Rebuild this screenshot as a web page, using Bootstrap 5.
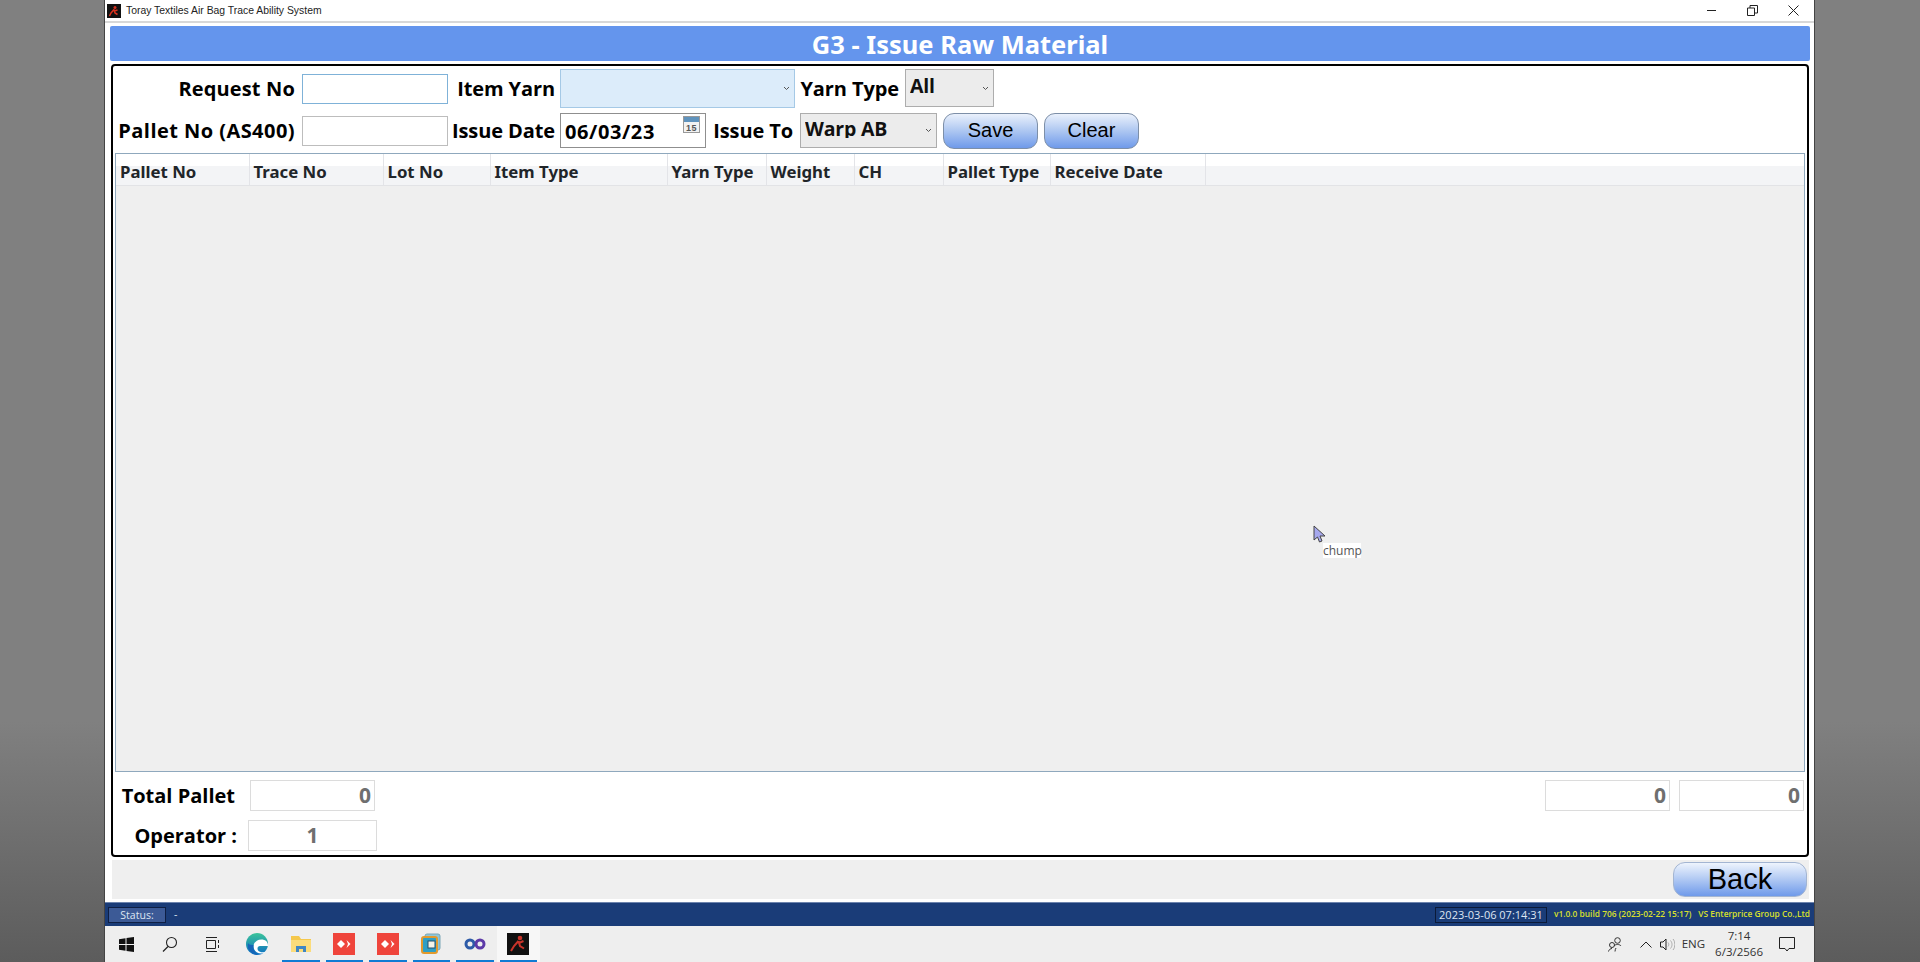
<!DOCTYPE html>
<html lang="en">
<head>
    <meta charset="UTF-8">
    <title>G3 - Issue Raw Material</title>
    <link href="https://cdn.jsdelivr.net/npm/bootstrap@5.3.0/dist/css/bootstrap.min.css" rel="stylesheet">
    <style>
        html, body { height: 100%; overflow: hidden; }
        body { background: linear-gradient(180deg, #808080 0, #808080 75%, #5c5c5c 100%); font-family: "Open Sans", "Noto Sans", sans-serif; color: #000; }
        .app-window { width: 1711px; height: 962px; margin-left: 104px; background: #fff; border-left: 1px solid #444; border-right: 1px solid #444; position: relative; }
        .title-strip { height: 23px; font-family: "Liberation Sans", sans-serif; font-size: 10.400px; color: #222; padding-left: 2px; border-bottom: 2px solid #d8d8d8; }
        .title-strip svg { margin-right: 5px; }
        .win-btn { width: 41px; display: flex; justify-content: center; }
        .win-btns { margin-right: -2px; }
        .form-banner { height: 35px; margin: 3px 4px 0 5px; background: #6495ed; color: #fff; font-family: "Noto Sans", sans-serif; font-weight: 700; font-size: 25.500px; border-radius: 2px; line-height: 36px; }
        .main-panel { margin: 3px 5px 0 6px; border: 2px solid #000; border-radius: 4px; min-height: 0; }
        .field-row { height: 35px; margin-top: 5px; }
        .field-row.first { height: 39px; margin-top: 3px; }
        .fld-label { font-weight: 700; font-size: 20px; text-align: right; white-space: nowrap; line-height: 1; margin-right: 6px; letter-spacing: -.1px; }
        .w-a { width: 182px; margin-right: 7px; }
        .w-a.req { letter-spacing: .15px; }
        .w-a.pal { letter-spacing: .45px; }
        .w-b { width: 107px; margin-right: 5px; }
        .w-c { width: 104px; }
        .w-d { width: 87px; margin-right: 7px; }
        .plain-input.form-control { width: 146px; height: 30px; border: 1px solid #bdbdbd; border-radius: 0; padding: 0 4px; }
        .plain-input.active-input { border-color: #7fb2d8; }
        .date-box { width: 146px; height: 35px; border: 1px solid #8f8f8f; font-weight: 700; font-size: 20px; letter-spacing: .6px; padding: 2px 4px 0; line-height: 31px; }
        .date-box svg { margin-top: -14px; margin-right: 1px; }
        .combo.form-select { height: 100%; border-radius: 0; padding: 0 0 4px 4px; font-weight: 700; font-size: 19.500px; letter-spacing: -.2px; line-height: 1; color: #111; background-color: #ececec; border: 1px solid #adadad; background-size: 7px 5px; background-position: right 4px center; background-image: url("data:image/svg+xml,%3csvg xmlns='http://www.w3.org/2000/svg' viewBox='0 0 7 5'%3e%3cpath fill='none' stroke='%23555' d='M1 1l2.500 2.500L6 1'/%3e%3c/svg%3e"); }
        .combo-yarn.form-select { width: 235px; background-color: #dcecfa; border-color: #a5c9e6; }
        .combo-type.form-select { width: 89px; height: 38px; margin-bottom: 1px; }
        .combo-issue.form-select { width: 137px; }
        .gel-btn.btn { height: 36px; width: 95px; margin-left: 6px; padding: 0 0 2px; font-family: "Liberation Sans", sans-serif; font-size: 20px; color: #000; border: 1px solid #7d8fa8; border-radius: 11px; background: linear-gradient(180deg, #eaf1fc 0, #b9cff3 40%, #6f9aea 100%); }
        .grid-box { margin: 5px 2px 0 2px; border: 1px solid #8fa8bd; background: #efefef; min-height: 0; }
        .grid-table.table { table-layout: fixed; width: 100%; margin: 0; --bs-table-bg: transparent; }
        .grid-table th { height: 31px; padding: 4px 0 0 4px; font-family: "Noto Sans", sans-serif; font-size: 16.800px; font-weight: 700; white-space: nowrap; vertical-align: middle; border-bottom: 1px solid #e2e3e6; border-right: 1px solid #e3e4e8; background: linear-gradient(180deg, #fff 0, #fff 38%, #f3f4f6 39%, #f3f4f6 100%); }
        .grid-table th:last-child { border-right: 0; }
        .foot-row { height: 31px; margin-top: 8px; }
        .foot-row + .foot-row { margin-top: 9px; margin-bottom: 4px; }
        .foot-label { font-weight: 700; font-size: 20px; text-align: right; white-space: nowrap; line-height: 1; }
        .foot-a { width: 122px; margin-right: 15px; }
        .foot-b { width: 124px; margin-right: 11px; }
        .num-box { width: 125px; height: 31px; border: 1px solid #dcdcdc; text-align: right; padding-right: 3px; color: #6f6f6f; font-weight: 700; font-size: 21px; line-height: 28px; }
        .num-box.op { width: 129px; text-align: center; padding: 0; }
        .num-box + .num-box { margin-left: 9px; }
        .num-group { margin-right: 3px; }
        .back-bar { height: 39px; margin: 3px 5px 0 7px; background: #efefef; }
        .back-btn.btn { width: 134px; height: 35px; margin: 2px 2px 0 0; padding: 0 0 1px; font-family: "Liberation Sans", sans-serif; font-size: 29px; line-height: 1; color: #000; border: 1px solid #a3b5d2; border-radius: 12px; background: linear-gradient(180deg, #eef4fd 0, #bcd1f5 40%, #6f9aea 100%); }
        .status-strip { height: 24px; margin-top: 3px; background: #1a3c78; color: #dfe6f2; font-size: 10.500px; border-top: 1px solid #6c83ad; }
        .status-tag { width: 58px; height: 16px; margin-left: 3px; background: #3c5a96; border: 1px solid #0e1f44; text-align: center; line-height: 14px; }
        .status-clock { width: 112px; height: 16px; background: #1a3c78; border: 1px solid #0b1a38; text-align: center; line-height: 14px; font-size: 11px; }
        .status-ver { color: #d9e02c; font-size: 8.400px; font-weight: 600; margin-left: 7px; white-space: nowrap; }
        .task-strip { height: 36px; background: #eee; }
        .task-item { width: 43.500px; height: 36px; display: flex; align-items: center; justify-content: center; position: relative; }
        .task-item.open::after { content: ""; position: absolute; left: 3px; right: 3px; bottom: 0; height: 2px; background: #0f7bd4; }
        .task-item.current { background: #f7f7f7; }
        .tray-text { font-size: 11.500px; color: #333; line-height: 16px; text-align: center; }
        .tray-people { margin-right: 18px; }
        .tray-up { margin-right: 8px; }
        .tray-eng { margin-left: 7px; }
        .tray-clock { margin-left: 10px; }
        .tray-tail { width: 19px; }
        .mouse-mark { position: absolute; left: 1208px; top: 525px; }
        .mouse-tip { position: absolute; left: 1218px; top: 543px; background: #fff; font-size: 12px; color: #555; line-height: 15px; width: 38px; text-align: center; }
    </style>
</head>
<body>
    <div class="app-window d-flex flex-column">
        <div class="title-strip d-flex align-items-center flex-shrink-0">
            <svg width="14" height="14" viewBox="0 0 14 14"><rect width="14" height="14" fill="#111"/><circle cx="8" cy="3.500" r="1.500" fill="#d8321f"/><path d="M7 5.500L4 9l-1.500 3M7 5.500l1 3.500 2.500 1.500M7.500 7l3-1" stroke="#d8321f" stroke-width="1.500" fill="none"/></svg>
            <span>Toray Textiles Air Bag Trace Ability System</span>
            <div class="win-btns ms-auto d-flex">
                <div class="win-btn"><svg width="11" height="11" viewBox="0 0 11 11"><path d="M1 5.500h9" stroke="#222"/></svg></div>
                <div class="win-btn"><svg width="11" height="11" viewBox="0 0 11 11"><path d="M.5 3h7v7.500h-7zM3 3V.5h7.500V8H7.500" fill="none" stroke="#222"/></svg></div>
                <div class="win-btn"><svg width="11" height="11" viewBox="0 0 11 11"><path d="M.5.500l10 10M10.500.500l-10 10" stroke="#222"/></svg></div>
            </div>
        </div>

        <div class="form-banner text-center flex-shrink-0">G3 - Issue Raw Material</div>

        <div class="main-panel d-flex flex-column flex-grow-1">
            <div class="field-row first d-flex align-items-center flex-shrink-0">
                <div class="fld-label w-a req">Request No</div>
                <input class="form-control plain-input active-input" type="text">
                <div class="fld-label w-b">Item Yarn</div>
                <select class="form-select combo combo-yarn"><option></option></select>
                <div class="fld-label w-c">Yarn Type</div>
                <select class="form-select combo combo-type"><option>All</option></select>
            </div>
            <div class="field-row d-flex align-items-center flex-shrink-0">
                <div class="fld-label w-a pal">Pallet No (AS400)</div>
                <input class="form-control plain-input" type="text">
                <div class="fld-label w-b">Issue Date</div>
                <div class="date-box d-flex justify-content-between align-items-center">
                    <span>06/03/23</span>
                    <svg width="17" height="17" viewBox="0 0 17 17"><rect x=".5" y=".5" width="16" height="16" fill="#f2f2f2" stroke="#999"/><rect x="1" y="1" width="15" height="5" fill="#5f93bd"/><text x="8.500" y="14.500" font-size="9" text-anchor="middle" fill="#555" font-family="Liberation Sans">15</text></svg>
                </div>
                <div class="fld-label w-d">Issue To</div>
                <select class="form-select combo combo-issue"><option>Warp AB</option></select>
                <button class="btn gel-btn" type="button">Save</button>
                <button class="btn gel-btn" type="button">Clear</button>
            </div>

            <div class="grid-box flex-grow-1">
                <table class="table grid-table">
                    <colgroup>
                        <col style="width:133px"><col style="width:134px"><col style="width:107px"><col style="width:177px"><col style="width:99px"><col style="width:88px"><col style="width:89px"><col style="width:107px"><col style="width:155px"><col>
                    </colgroup>
                    <thead>
                        <tr>
                            <th>Pallet No</th><th>Trace No</th><th>Lot No</th><th>Item Type</th><th>Yarn Type</th><th>Weight</th><th>CH</th><th>Pallet Type</th><th>Receive Date</th><th></th>
                        </tr>
                    </thead>
                </table>
            </div>

            <div class="foot-row d-flex align-items-center flex-shrink-0">
                <div class="foot-label foot-a">Total Pallet</div>
                <div class="num-box">0</div>
                <div class="num-group ms-auto d-flex">
                    <div class="num-box">0</div>
                    <div class="num-box">0</div>
                </div>
            </div>
            <div class="foot-row d-flex align-items-center flex-shrink-0">
                <div class="foot-label foot-b">Operator :</div>
                <div class="num-box op">1</div>
            </div>
        </div>

        <div class="back-bar d-flex justify-content-end flex-shrink-0">
            <button class="btn back-btn" type="button">Back</button>
        </div>

        <div class="status-strip d-flex align-items-center flex-shrink-0">
            <div class="status-tag">Status:</div>
            <span class="ms-2">-</span>
            <div class="status-clock ms-auto">2023-03-06 07:14:31</div>
            <span class="status-ver">v1.0.0 build 706 (2023-02-22 15:17)</span>
            <span class="status-ver me-1">VS Enterprice Group Co.,Ltd</span>
        </div>

        <div class="task-strip d-flex align-items-center flex-shrink-0">
            <div class="task-item"><svg width="15" height="15" viewBox="0 0 15 15"><path d="M0 2.200l6.500-1V7H0zM7.500 1L15 0v7H7.500zM0 8h6.500v5.800l-6.500-1zM7.500 8H15v7l-7.500-1z" fill="#111"/></svg></div>
            <div class="task-item"><svg width="16" height="16" viewBox="0 0 16 16"><circle cx="9.500" cy="6.500" r="5" fill="none" stroke="#222" stroke-width="1.100"/><path d="M6 10.500L1 15.500" stroke="#222" stroke-width="1.300"/></svg></div>
            <div class="task-item"><svg width="16" height="15" viewBox="0 0 16 15"><path d="M.5 3.500h9v8h-9zM0 .5h11M0 14.500h11M12.500 3v3M12.500 8v3" fill="none" stroke="#222"/></svg></div>
            <div class="task-item"><svg width="22" height="22" viewBox="0 0 22 22"><defs><linearGradient id="edgeA" x1="0" y1="0" x2="0" y2="1"><stop offset="0" stop-color="#3bc49a"/><stop offset="1" stop-color="#0c6fc4"/></linearGradient></defs><circle cx="11" cy="11" r="11" fill="url(#edgeA)"/><path d="M22 12.500c0-4-3-6-6.500-6-4.500 0-8 3-8 7 0 3.500 3 7 8 7 1.500 0 3-.5 4-1.500-3 1-8 0-8-3.500 0-1.500 1-2.500 2.500-2.500h8z" fill="#fff"/><path d="M8 21C3 19 1 15 2 10c1 2 3 2 5.500 2-.5 3 .5 7 4 9.500-1 .5-2.500.300-3.500-.5z" fill="#1565b8"/></svg></div>
            <div class="task-item open"><svg width="20" height="18" viewBox="0 0 20 18"><path d="M0 1h8l2 3h10v13H0z" fill="#f5c84c"/><rect y="5" width="20" height="12" fill="#fbdc7c"/><path d="M5 17v-6h10v6h-3v-3H8v3z" fill="#3f86c4"/></svg></div>
            <div class="task-item open"><svg width="22" height="22" viewBox="0 0 22 22"><rect width="22" height="22" fill="#ef443b"/><path d="M8 7l4 4-4 4-4-4zM13.500 7l4 4-4 4 1.500-4z" fill="#fff"/></svg></div>
            <div class="task-item open"><svg width="22" height="22" viewBox="0 0 22 22"><rect width="22" height="22" fill="#ef443b"/><path d="M8 7l4 4-4 4-4-4zM13.500 7l4 4-4 4 1.500-4z" fill="#fff"/></svg></div>
            <div class="task-item open"><svg width="20" height="22" viewBox="0 0 20 22"><rect x="4" y="1" width="15" height="16" rx="2" fill="#8fc7d8" stroke="#7aa5b5"/><rect x="1" y="4" width="15" height="16" rx="2" fill="#2f9fc4" stroke="#e29a2e" stroke-width="2"/><rect x="7" y="8" width="7" height="7" fill="#f4f4e8" stroke="#23506e"/></svg></div>
            <div class="task-item open"><svg width="22" height="12" viewBox="0 0 22 12"><circle cx="6" cy="6" r="4" fill="none" stroke="#2d5ba8" stroke-width="3"/><circle cx="16" cy="6" r="4" fill="none" stroke="#5d3aa8" stroke-width="3"/></svg></div>
            <div class="task-item open current"><svg width="22" height="22" viewBox="0 0 22 22"><rect width="22" height="22" fill="#111"/><circle cx="13" cy="5" r="2.300" fill="#c9342a"/><path d="M11.500 8L7 13l-3 5M11.500 8l1.500 5 4 2.500M12 10l4.500-2" stroke="#c9342a" stroke-width="2" fill="none"/></svg></div>

            <div class="ms-auto d-flex align-items-center">
                <svg class="tray-people" width="14" height="15" viewBox="0 0 14 15"><circle cx="4" cy="8" r="2.500" fill="none" stroke="#333"/><path d="M.5 14.500c.5-2 2-3 3.500-3M8 11c-.5 1-1 2-1 3.500" fill="none" stroke="#333"/><circle cx="9.500" cy="3.500" r="2.800" fill="none" stroke="#333"/><path d="M6 9c1-2 6-2 7 0" fill="none" stroke="#333"/></svg>
                <svg class="tray-up" width="12" height="7" viewBox="0 0 12 7"><path d="M.5 6.500L6 1l5.500 5.500" fill="none" stroke="#222"/></svg>
                <svg width="15" height="13" viewBox="0 0 15 13"><path d="M.5 4h2.500L6 1v11L3 9H.5z" fill="none" stroke="#222"/><path d="M8 4.500c1 1.500 1 2.500 0 4M10.500 2.500c2 2.500 2 5.500 0 8M13 1c2.500 3 2.500 8 0 11" fill="none" stroke="#aaa"/></svg>
                <span class="tray-text tray-eng">ENG</span>
                <div class="tray-text tray-clock"><div>7:14</div><div>6/3/2566</div></div>
                <svg width="16" height="16" viewBox="0 0 16 16" class="ms-3"><path d="M.5 1.500h15v11H10l-2 2.500-2-2.500H.5z" fill="none" stroke="#222"/></svg>
                <span class="d-inline-block tray-tail"></span>
            </div>
        </div>

        <svg class="mouse-mark" width="13" height="18" viewBox="0 0 13 18"><path d="M1 1v14l3.500-3 2 5 2.500-1-2-5h5z" fill="#a6a8ee" stroke="#444"/></svg>
        <div class="mouse-tip">chump</div>
    </div>
    <script src="https://cdn.jsdelivr.net/npm/bootstrap@5.3.0/dist/js/bootstrap.bundle.min.js"></script>
</body>
</html>
